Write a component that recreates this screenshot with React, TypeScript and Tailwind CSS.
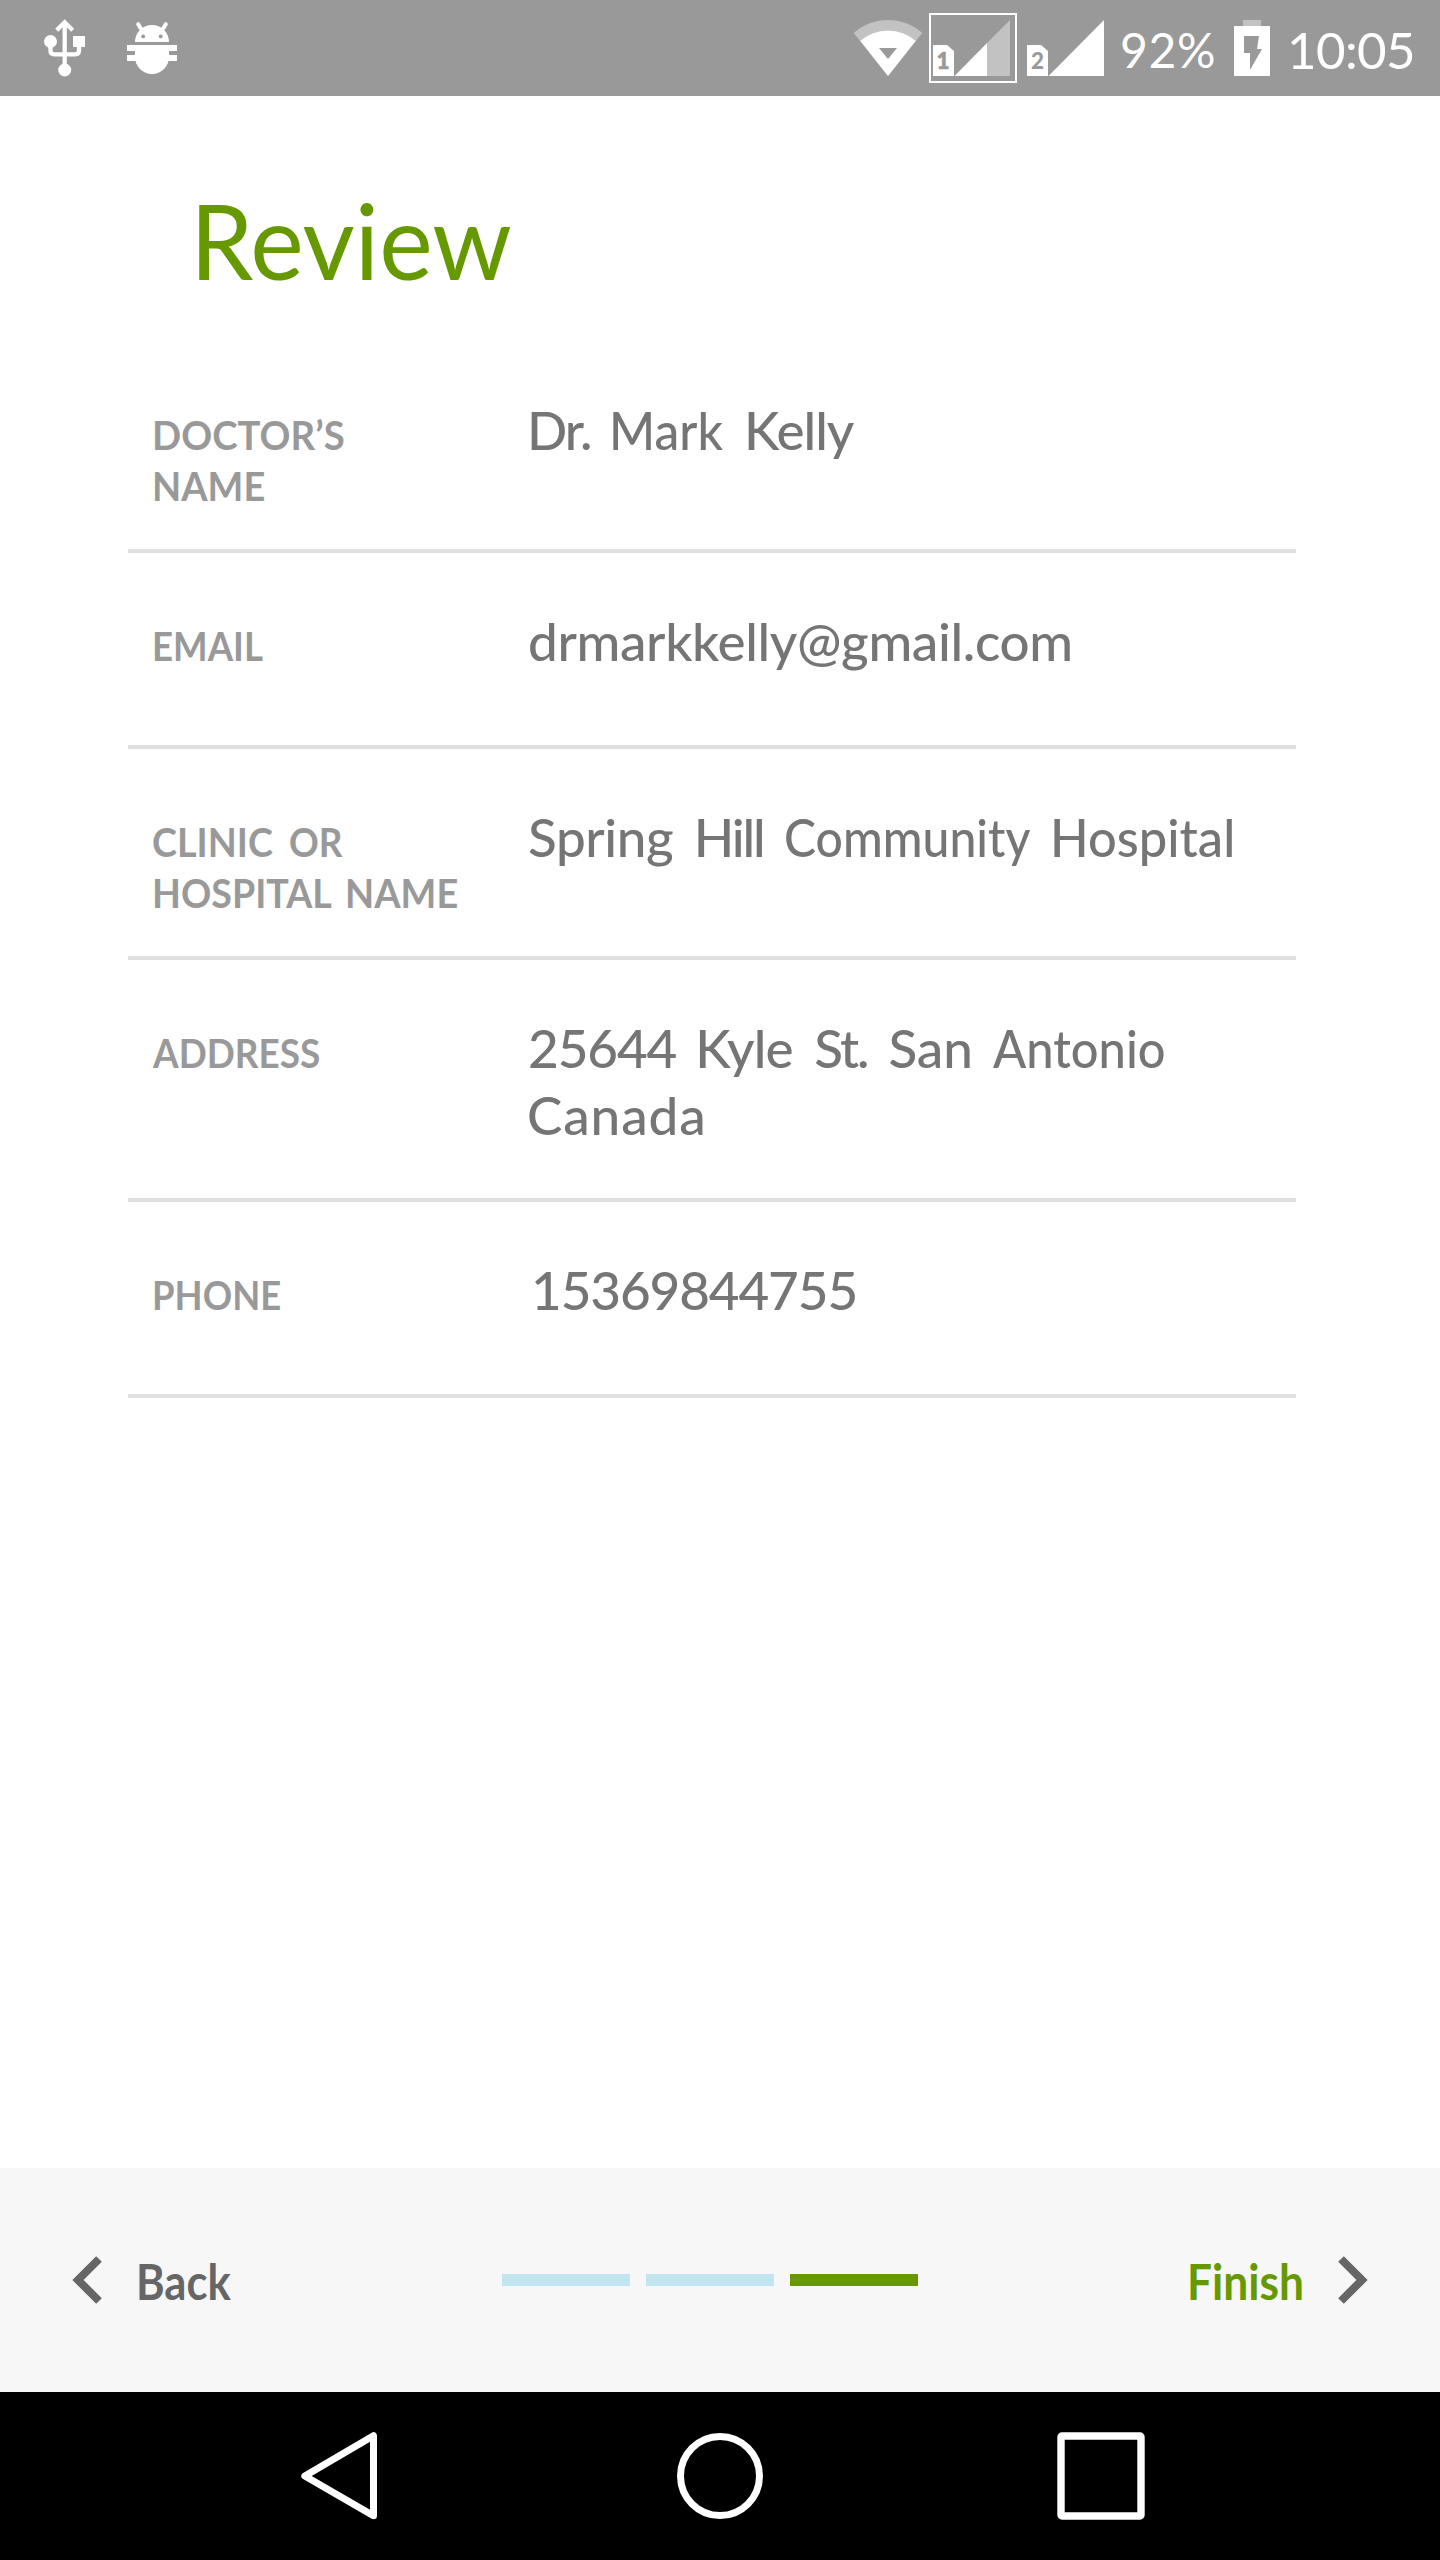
import { Fragment, type ReactNode } from 'react'

function Svg({ x, y, w, h, className = '', children }: { x: number; y: number; w: number; h: number; className?: string; children: ReactNode }) {
  return (
    <svg width={w} height={h} viewBox={`${x} ${y} ${w} ${h}`} className={`block shrink-0 ${className}`}>
      {children}
    </svg>
  )
}

function StatusBar() {
  return (
    <header className="flex h-24 items-center bg-[#999999] pl-[43px] text-white">
      <Svg x={43} y={0} w={44} h={96}>
        <g fill="none" stroke="#fff" strokeWidth="4.3">
          <path d="M64.7 23V70" />
          <path d="M56.7 30.2L64.7 22.2L72.7 30.2" />
          <path d="M50.5 44V50.5Q50.5 54.3 54.3 54.3H75.2Q79 54.3 79 50.5V44" />
        </g>
        <g fill="#fff">
          <circle cx="50.5" cy="41.5" r="6.5" />
          <circle cx="64.7" cy="70" r="6.5" />
          <rect x="73" y="36" width="12" height="11" />
        </g>
      </Svg>
      <Svg x={127} y={0} w={50} h={96} className="ml-10">
        <g fill="#fff">
          <path d="M135 42A17 17 0 0 1 169 42Z" />
          <path d="M135 45H169V57A17 17 0 0 1 135 57Z" />
          <rect x="127" y="45" width="50" height="6" />
          <rect x="127" y="55" width="50" height="6" />
        </g>
        <path d="M138.2 24.2L142.3 31M165.8 24.2L161.7 31" stroke="#fff" strokeWidth="4" strokeLinecap="round" />
        <circle cx="143.2" cy="36.4" r="1.9" fill="#999" />
        <circle cx="160.7" cy="36.4" r="1.9" fill="#999" />
      </Svg>

      <Svg x={853} y={0} w={70} h={96} className="ml-auto">
        <path d="M853.7 33A51.5 51.5 0 0 1 922.3 33L888 76Z" fill="#c2c2c2" />
        <path d="M860.2 40.8A42.6 42.6 0 0 1 915.8 40.8L888 76Z" fill="#fff" />
        <path d="M879 48H897L888 59Z" fill="#999" />
      </Svg>
      <Svg x={929} y={0} w={88} h={96} className="ml-[6px]">
        <rect x="930" y="14" width="86" height="68" fill="none" stroke="#fff" strokeWidth="2" />
        <path d="M933 45H947L954 51V76H933Z" fill="#fff" />
        <path d="M987 43L1010 20V76H987Z" fill="#c2c2c2" />
        <path d="M954.5 76L987 43V76Z" fill="#fff" />
        <text x="943" y="69" textAnchor="middle" fontFamily="Lato" fontWeight="900" fontSize="22.5" fill="#999" stroke="#999" strokeWidth="0.6">1</text>
      </Svg>
      <Svg x={1027} y={0} w={77} h={96} className="ml-[10px]">
        <path d="M1027 45H1041L1048 51V76H1027Z" fill="#fff" />
        <path d="M1048.5 76L1104 20V76Z" fill="#fff" />
        <text x="1037.5" y="69" textAnchor="middle" fontFamily="Lato" fontWeight="900" fontSize="22.5" fill="#999">2</text>
      </Svg>
      <span className="mt-1 ml-4 w-[114px] text-[48px] leading-[60px] tracking-[0.7px]">92%</span>
      <Svg x={1234} y={0} w={36} h={96}>
        <rect x="1243" y="20" width="18" height="6" fill="#c2c2c2" />
        <rect x="1234" y="26" width="36" height="50" fill="#fff" />
        <path d="M1244 36H1259L1257 49H1262L1250 70V53H1244Z" fill="#999" />
      </Svg>
      <span className="mt-[3px] ml-[17px] w-[153px] text-[51px] leading-[60px] tracking-[-0.6px]">10:05</span>
    </header>
  )
}

/** A word and its width / leading-gap classes. */
type Word = [text: string, className: string]
type Row = { height: string; label: Word[][]; value: Word[][] }

const rows: Row[] = [
  {
    height: 'h-[211px]',
    label: [[['DOCTOR’S', 'scale-x-[0.935]']], [['NAME', 'scale-x-[0.925]']]],
    value: [[['Dr.', 'tracking-[-2px]'], ['Mark', 'ml-[5px] scale-x-[0.935]'], ['Kelly', 'ml-[-0.2px] tracking-[-1px]']]],
  },
  {
    height: 'h-[196px]',
    label: [[['EMAIL', 'scale-x-[0.893]']]],
    value: [[['drmarkkelly@gmail.com', 'ml-[1px] tracking-[-0.35px]']]],
  },
  {
    height: 'h-[211px]',
    label: [
      [['CLINIC', 'scale-x-[0.92]'], ['OR', '-ml-1 scale-x-[0.9]']],
      [['HOSPITAL', 'scale-x-[0.916]'], ['NAME', 'ml-[-13.7px] scale-x-[0.925]']],
    ],
    value: [
      [
        ['Spring', 'ml-[1px] tracking-[-0.4px]'],
        ['Hill', 'ml-[7px] tracking-[-2.2px]'],
        ['Community', 'ml-[7px] scale-x-[0.908]'],
        ['Hospital', 'ml-[-18.8px] scale-x-[0.955]'],
      ],
    ],
  },
  {
    height: 'h-[242px]',
    label: [[['ADDRESS', 'ml-[1px] scale-x-[0.9]']]],
    value: [
      [
        ['25644', 'ml-[1px] tracking-[-1.1px]'],
        ['Kyle', 'ml-[5.6px] tracking-[-0.8px]'],
        ['St.', 'ml-[8px] tracking-[-2px]'],
        ['San', 'ml-[7.4px]'],
        ['Antonio', 'ml-[6.4px] scale-x-[0.922]'],
      ],
      [['Canada', 'tracking-[0.9px]']],
    ],
  },
  {
    height: 'h-[196px]',
    label: [[['PHONE', 'scale-x-[0.89]']]],
    value: [[['15369844755', 'ml-[4px] tracking-[-1.1px]']]],
  },
]

function Lines({ lines }: { lines: Word[][] }) {
  return (
    <>
      {lines.map((words, i) => (
        <div key={i} className="whitespace-nowrap">
          {words.map(([text, className], j) => (
            <Fragment key={j}>
              {j > 0 && ' '}
              <span className={`inline-block origin-left ${className}`}>{text}</span>
            </Fragment>
          ))}
        </div>
      ))}
    </>
  )
}

export default function App() {
  return (
    <div className="flex h-[2560px] w-[1440px] flex-col bg-white font-[Lato,sans-serif]">
      <StatusBar />
      <main className="flex-1 pr-36 pl-32">
        <h1 className="h-[246px] pt-20 pl-[62px] text-[105px] leading-[126px] text-[#669900]">
          <span className="inline-block origin-left scale-x-[0.965]">Review</span>
        </h1>
        {rows.map((row, i) => (
          <div key={i} className={`flex border-b-4 border-[#e0e0e0] ${row.height}`}>
            <div className="w-[399px] pt-[67px] pl-6 text-[41px] leading-[51px] font-bold text-[#999999]">
              <Lines lines={row.label} />
            </div>
            <div className="pt-[54px] text-[53px] leading-[67px] font-medium text-[#757575]">
              <Lines lines={row.value} />
            </div>
          </div>
        ))}
      </main>
      <footer className="flex h-56 items-center bg-[#f7f7f7] pl-[72px] text-[49px] leading-[60px] font-bold">
        <Svg x={72} y={2256} w={32} h={48}>
          <path d="M99 2259L78 2280L99 2301" fill="none" stroke="#666" strokeWidth="8" />
        </Svg>
        <span className="mt-[2px] ml-[32px] w-[366px] text-[#666666]">
          <span className="inline-block origin-left scale-x-[0.89]">Back</span>
        </span>
        <div className="flex w-[416px] gap-4">
          <i className="h-3 w-32 bg-[#c3e5f1]" />
          <i className="h-3 w-32 bg-[#c3e5f1]" />
          <i className="h-3 w-32 bg-[#669900]" />
        </div>
        <span className="mt-[2px] ml-[269px] w-[151px] text-[#669900]">
          <span className="inline-block origin-left scale-x-[0.905]">Finish</span>
        </span>
        <Svg x={1338} y={2256} w={32} h={48}>
          <path d="M1341 2259L1362 2280L1341 2301" fill="none" stroke="#666" strokeWidth="8" />
        </Svg>
      </footer>
      <nav className="flex h-[168px] items-center bg-black pl-[300px]">
        <Svg x={300} y={2430} w={80} h={92}>
          <path d="M304.8 2476L373.5 2435.7V2515.7Z" fill="none" stroke="#fff" strokeWidth="7" strokeLinejoin="round" />
        </Svg>
        <Svg x={676} y={2430} w={88} h={92} className="ml-[296px]">
          <circle cx="720" cy="2476" r="39.5" fill="none" stroke="#fff" strokeWidth="7" />
        </Svg>
        <Svg x={1056} y={2430} w={90} h={92} className="ml-[292px]">
          <rect x="1061" y="2436" width="80" height="80" rx="1" fill="none" stroke="#fff" strokeWidth="7.4" strokeLinejoin="round" />
        </Svg>
      </nav>
    </div>
  )
}
